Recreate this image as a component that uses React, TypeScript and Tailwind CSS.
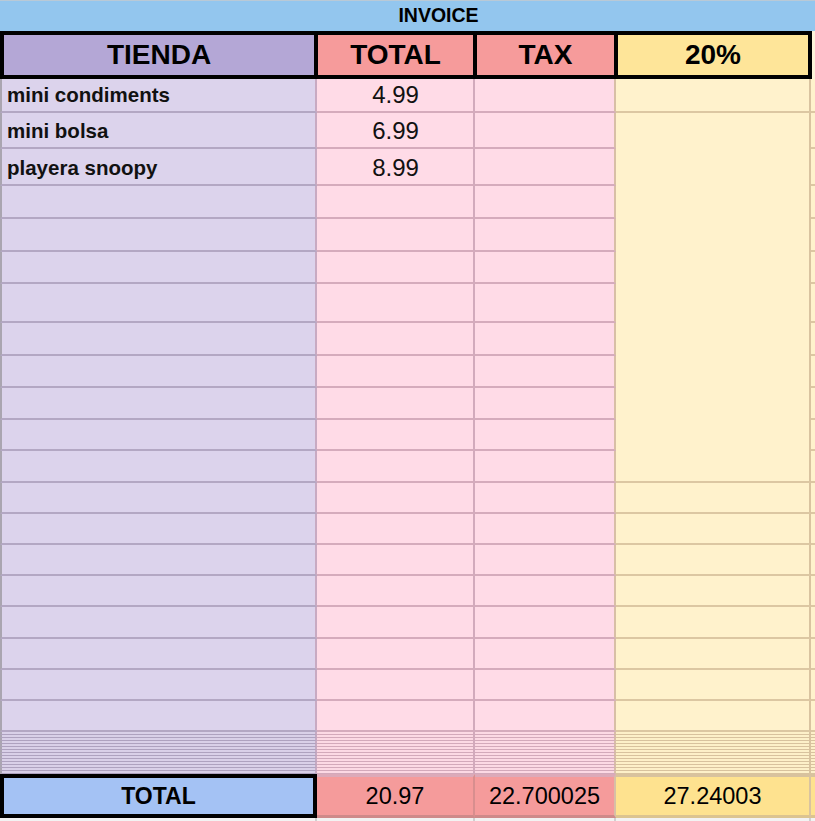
const FONT = "font-['Liberation_Sans',Arial,sans-serif]";

const COLS = "grid-cols-[317px_158px_141px_195px_4px]";

// row heights measured off the sheet, 20 body rows
const BODY_ROWS =
  "grid-rows-[34px_36px_37px_33px_33px_32px_39px_33px_32px_32px_31px_32px_31px_31px_31px_31px_32px_31px_31px_31px]";

const C1 = "bg-[#dcd3ec] border-b-2 border-b-[#b3a7c3] border-r-2 border-r-[#c8aac2] border-l-2 border-l-[#aaa5b0]";
const C2 = "bg-[#ffdbe7] border-b-2 border-b-[#d5abbc] border-r-2 border-r-[#d2aabc]";
const C3 = "bg-[#ffdbe7] border-b-2 border-b-[#d5abbc] border-r-2 border-r-[#d8bfa6]";
const C4 = "bg-[#fff2cc] border-b-2 border-b-[#dcc7a2] border-r-2 border-r-[#d9c3a0]";
const C5 = "bg-[#fff2cc] border-b-2 border-b-[#dcc7a2]";

const ITEMS = [
  { name: "mini condiments", total: "4.99" },
  { name: "mini bolsa", total: "6.99" },
  { name: "playera snoopy", total: "8.99" },
];

const ROW_COUNT = 20;

export default function App() {
  const cells: React.ReactNode[] = [];
  for (let i = 0; i < ROW_COUNT; i++) {
    const item = ITEMS[i];
    cells.push(
      <div key={`a${i}`} className={`${C1} flex items-end pb-[6px] pl-[5px] text-[20.5px] font-bold leading-none text-[#111]`}>
        {item?.name}
      </div>
    );
    cells.push(
      <div key={`b${i}`} className={`${C2} flex items-end justify-center pb-[4px] pl-[1px] text-[24px] leading-none text-[#111]`}>
        {item?.total}
      </div>
    );
    cells.push(<div key={`c${i}`} className={C3} />);
    // the 20% column is merged from row 2 to row 12
    if (i === 0 || i >= 12) cells.push(<div key={`d${i}`} className={C4} />);
    if (i === 1) cells.push(<div key="merged" className={`${C4} row-span-11`} />);
    cells.push(<div key={`e${i}`} className={C5} />);
  }

  const squashed = Array.from({ length: 14 }, (_, i) => i);

  return (
    <div className={`${FONT} h-[821px] w-[815px] overflow-hidden bg-[#f3f3f3] text-black`}>
      <div className="flex h-[31px] items-center justify-center border-t border-t-[#b9c9d6] bg-[#93c6ee] pl-[62px] text-[19.5px] font-bold leading-none">
        INVOICE
      </div>

      <div className="flex h-[48px]">
        <div className="grid w-[812px] grid-cols-[310px_155px_137px_190px] gap-[4px] bg-black p-[4px] text-[28px] font-bold leading-none">
          <div className="flex items-center justify-center bg-[#b4a7d6]">TIENDA</div>
          <div className="flex items-center justify-center bg-[#f69b9b]">TOTAL</div>
          <div className="flex items-center justify-center bg-[#f69b9b]">TAX</div>
          <div className="flex items-center justify-center bg-[#fee599]">20%</div>
        </div>
        <div className="flex-1 bg-[#fdf4d9]" />
      </div>

      <div className={`grid ${COLS} ${BODY_ROWS}`}>{cells}</div>

      <div className={`grid ${COLS} grid-rows-[repeat(14,3px)]`}>
        {squashed.map((i) => (
          <div key={i} className="contents">
            <div className="border-b border-b-[#aea2bf] border-l-2 border-l-[#aaa5b0] border-r-2 border-r-[#c8aac2] bg-[#d9d0e8]" />
            <div className="border-b border-b-[#d3a9ba] border-r-2 border-r-[#d2aabc] bg-[#fcd9e4]" />
            <div className="border-b border-b-[#d3a9ba] border-r-2 border-r-[#d8bfa6] bg-[#fcd9e4]" />
            <div className="border-b border-b-[#d8c29e] border-r-2 border-r-[#d9c3a0] bg-[#fdf0c9]" />
            <div className="border-b border-b-[#d8c29e] bg-[#fdf0c9]" />
          </div>
        ))}
      </div>

      <div className={`grid ${COLS} h-[44px] text-[23.5px] leading-none`}>
        <div className="flex items-center justify-center border-4 border-black bg-[#a4c2f4] text-[23px] font-bold">
          TOTAL
        </div>
        <div className="flex items-center justify-center border-t-[3px] border-t-[#dcaab9] border-b-[3px] border-b-[#cf8a8a] border-r-2 border-r-[#d88e8e] bg-[#f59b9b] pt-[1px]">
          20.97
        </div>
        <div className="flex items-center justify-center border-t-[3px] border-t-[#dcaab9] border-b-[3px] border-b-[#cf8a8a] border-r-2 border-r-[#d8bfa6] bg-[#f59b9b] pt-[1px]">
          22.700025
        </div>
        <div className="flex items-center justify-center border-t-[3px] border-t-[#d8c29e] border-b-[3px] border-b-[#dcc490] border-r-2 border-r-[#d9c3a0] bg-[#fee28f] pt-[1px]">
          27.24003
        </div>
        <div className="border-t-[3px] border-t-[#d8c29e] border-b-[3px] border-b-[#dcc490] bg-[#fee28f]" />
      </div>

      <div className={`grid ${COLS} h-[3px]`}>
        <div className="border-r-2 border-r-[#d0d0d0]" />
        <div className="border-r-2 border-r-[#d0d0d0]" />
        <div className="border-r-2 border-r-[#d0d0d0]" />
        <div className="border-r-2 border-r-[#d0d0d0]" />
        <div />
      </div>
    </div>
  );
}
